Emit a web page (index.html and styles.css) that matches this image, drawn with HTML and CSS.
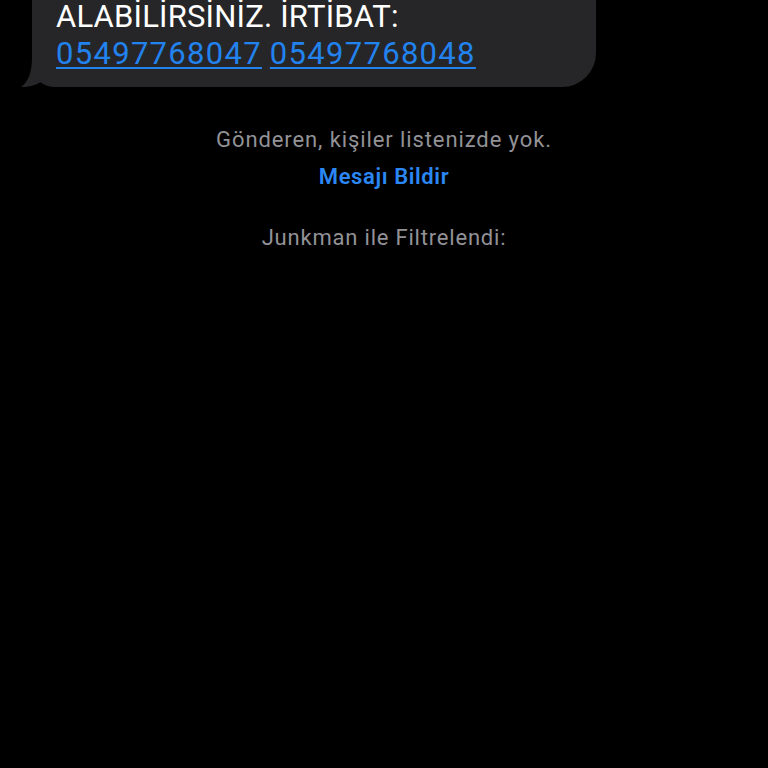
FILE: index.html
```html
<!DOCTYPE html>
<html lang="tr">
<head>
<meta charset="utf-8">
<link rel="stylesheet" href="styles.css">
</head>
<body>
<div class="thread">
  <div class="bubble">
    <p class="msg">ALABİLİRSİNİZ. İRTİBAT:<br><a class="link" href="#">05497768047</a> <a class="link" href="#">05497768048</a></p>
    <svg class="tail" width="40" height="32" viewBox="0 0 40 32"><path d="M16,0 C16,16 12,25 5,30 C13,30.5 21,28 28,23 L34,0 Z" fill="#262628"/></svg>
  </div>
  <p class="note">Gönderen, kişiler listenizde yok.</p>
  <p class="report">Mesajı Bildir</p>
  <p class="filter">Junkman ile Filtrelendi:</p>
</div>
</body>
</html>
```
FILE: styles.css
```css
html, body {
  margin: 0;
  padding: 0;
  background: #000;
  width: 768px;
  height: 768px;
  overflow: hidden;
}
.thread {
  display: flex;
  flex-direction: column;
  align-items: center;
  font-family: Roboto, "Liberation Sans", Arial, sans-serif;
}
.bubble {
  position: relative;
  align-self: flex-start;
  margin-left: 32px;
  margin-top: -40px;
  width: 564px;
  box-sizing: border-box;
  padding: 38px 15px 15px 24px;
  background: #262628;
  border-radius: 0 0 34px 22px;
}
.msg {
  margin: 0;
  color: #fff;
  font-size: 31px;
  line-height: 37px;
  letter-spacing: 0.2px;
}
.link {
  color: #2282ee;
  letter-spacing: 1.3px;
  text-decoration: underline;
  text-decoration-thickness: 2px;
  text-underline-offset: 3px;
}
.tail {
  position: absolute;
  left: -16px;
  bottom: -2px;
}
.note, .report, .filter {
  margin: 0;
  font-size: 22px;
  line-height: 26px;
  text-align: center;
  letter-spacing: 0.9px;
}
.note {
  margin-top: 40px;
  color: #929297;
}
.report {
  margin-top: 11px;
  color: #2b87f3;
  font-weight: 600;
  letter-spacing: 0.6px;
}
.filter {
  margin-top: 35px;
  color: #929297;
  letter-spacing: 0.8px;
}
```
